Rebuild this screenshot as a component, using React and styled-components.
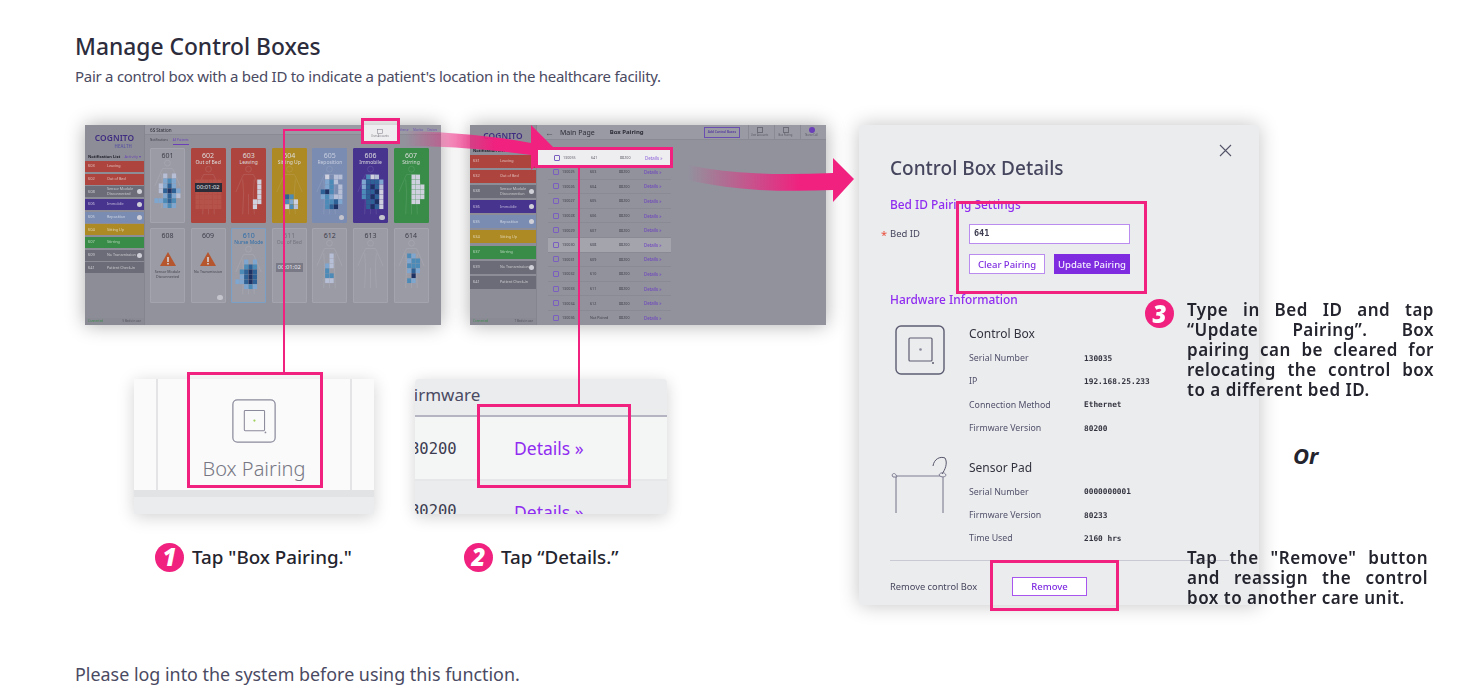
import React from "react";
import styled, { createGlobalStyle } from "styled-components";

const PINK = "#f0217f";
const PURPLE = "#8f2cf0";
const SANS = `"Noto Sans", "Open Sans", sans-serif`;
const MONO = `"DejaVu Sans Mono", "Liberation Mono", monospace`;

const Global = createGlobalStyle`
  html, body { margin: 0; padding: 0; background: #fff; font-family: ${SANS}; }
  * { box-sizing: border-box; }
`;

const Page = styled.div`
  width: 1474px; height: 700px; padding: 32px 0 0 75px; overflow: hidden; color: #46465e;
`;
const Title = styled.h1`
  margin: 0; font-size: 22.8px; line-height: 30px; font-weight: 500; color: #2c2c3c;
`;
const Subtitle = styled.p`
  margin: 3px 0 0; font-size: 15px; line-height: 22px; color: #4a4a62; letter-spacing: -.27px;
`;
const Footer = styled.p`
  margin: 57px 0 0; font-size: 17.9px; line-height: 24px; color: #4a4a62;
`;
const Figure = styled.div`
  position: relative; margin: 38px 0 0 10px; width: 1300px; height: 480px; display: flex;
`;
const LeftCol = styled.div`
  width: 774px; flex: none; display: flex; flex-direction: column;
`;
const ScreenRow = styled.div`display: flex; gap: 29px;`;
const ZoomRow = styled.div`display: flex; gap: 41px; margin: 54px 0 0 49px;`;
const CaptionRow = styled.div`display: flex; margin: 29px 0 0 70px;`;
const Caption = styled.div`
  display: flex; align-items: center; gap: 8px; width: ${p => p.$w}px; height: 28px;
  font-size: 18.8px; font-weight: 500; color: #24242e; white-space: nowrap;
`;
const Badge = styled.span`
  width: 29px; height: 29px; flex: none; border-radius: 50%; background: ${PINK}; color: #fff;
  display: flex; align-items: center; justify-content: center;
  font: italic 900 24px ${SANS}; line-height: 1;
`;

/* ---------- blurred thumbnails ---------- */
const Screen = styled.div`
  position: relative; width: 356px; height: 200px; flex: none; background: #92929d; display: flex;
  box-shadow: 0 0 18px rgba(0,0,0,.32); overflow: hidden; filter: blur(0.7px); color: #3c3c48;
`;
const Side = styled.div`
  width: ${p => p.$w}px; flex: none; background: #8d8d97; display: flex; flex-direction: column;
  border-right: 1px solid #85858f;
`;
const Logo = styled.div`
  margin-top: ${p => p.$top}px; height: ${p => p.$h}px; text-align: center; color: #3f2c80; font-size: 8.4px; line-height: 11px;
  font-weight: 600; letter-spacing: .1px;
  small { display: block; font-size: 4.4px; line-height: 6px; text-align: right; padding-right: 12px; color: #5c58a0; }
`;
const ListHead = styled.div`
  display: flex; justify-content: space-between; padding: 0 3px; font-size: 4px; line-height: 5px;
  margin: 0 0 2px; font-weight: 700; color: #22222c; span { color: #6a4ab0; font-weight: 400; }
`;
const SideRow = styled.div`
  height: ${p => p.$h}px; margin-bottom: ${p => p.$gap}px; background: ${p => p.$c}; color: rgba(255,255,255,.62);
  display: flex; align-items: center; font-size: 3.7px; line-height: 4.4px; padding-left: 3px;
  b { width: ${p => p.$num}px; flex: none; font-weight: 400; font-size: 4px; }
  span { flex: 1; }
  i { width: 5px; height: 5px; margin-right: 2px; border-radius: 50%; background: #d0d0d8; }
`;
const SideFoot = styled.div`
  margin-top: auto; height: 7px; display: flex; justify-content: space-between; padding: 0 3px;
  font-size: 3px; line-height: 7px; color: #3d8a4d; background: #8a8a94; span { color: #55555f; }
`;
const Main = styled.div`flex: 1; display: flex; flex-direction: column; min-width: 0;`;
const Head = styled.div`
  height: ${p => p.$h}px; flex: none; display: flex; align-items: center; padding-left: 5px; background: #9a9aa4;
  font-size: ${p => p.$fs}px; color: #2d2d38; border-bottom: 1px solid #8a8a94; gap: 3px;
  b { font-size: 6px; margin-left: 12px; }
`;
const HeadRight = styled.div`
  margin-left: auto; display: flex; gap: 4px; align-items: center; font-size: 2.7px; color: #6d4fb0; padding-right: 4px;
`;
const Highlight = styled.div`
  position: absolute; left: 277px; top: 0; width: 36px; height: 16px; background: #eeeef0;
  display: flex; flex-direction: column; align-items: center; justify-content: center; font-size: 2.6px; color: #77777f;
  svg { display: block; }
`;
const NurseDot = styled.span`
  width: 6px; height: 6px; border-radius: 50%; background: #6a3fb8; display: block;
`;
const Tabs = styled.div`
  height: 13px; flex: none; display: flex; gap: 5px; padding: 3px 0 0 5px; font-size: 3px; color: #40404c;
  span:last-child { color: #6a3fb8; border-bottom: 1px solid #6a3fb8; height: 7px; }
`;
const CardGrid = styled.div`
  display: grid; grid-template-columns: repeat(7, 35px); grid-auto-rows: 75px; gap: 5px 5.6px; padding-left: 5px;
`;
const Card = styled.div`
  border-radius: 1px; background: ${p => p.$c || "#9b9ba6"};
  border: 1px solid ${p => p.$b || "#a4a4ae"}; text-align: center; color: ${p => p.$t || "#3e3e4a"};
  font-size: 7px; line-height: 7px; padding-top: 3px; position: relative; overflow: hidden;
  small { display: block; font-size: 5px; line-height: 6px; white-space: nowrap; }
  svg { display: block; margin: 0 auto; }
`;
const Timer = styled.span`
  position: absolute; left: 3px; right: 3px; top: 34px; height: 9px; background: ${p => p.$bg || "#2c2c38"};
  color: #e8e8ee; font-size: 5.8px; line-height: 9px; text-align: center;
`;
const Warn = styled.div`
  font-size: 3.6px; line-height: 4.6px; color: #44444e; padding: 0 2px;
  svg { margin: 13px auto 4px; }
`;
const Info = styled.span`
  position: absolute; right: 2px; bottom: 2px; width: 5.5px; height: 5.5px; border-radius: 50%; background: #c4c4cc;
`;
const Back = styled.span`font-size: 9px; color: #55555f; margin: 0 3px 0 3px;`;
const TableHost = styled.div`display: flex; flex-direction: column; padding: 25px 0 0 11px; width: 134px;`;
const TRow = styled.div`
  height: 14.6px; flex: none; display: grid; grid-template-columns: 9px 28px 29px 25px 1fr; align-items: center;
  font-size: 3.7px; color: #3f3f4a; border-bottom: 1px solid #8a8a95; padding-left: 5px;
  background: ${p => (p.$hi ? "#a4a4ad" : "transparent")};
  em { font-style: normal; font-size: 4.4px; color: #6a3fc0; }
`;
const TIcon = styled.span`
  width: 6px; height: 6px; border: 1px solid #7a5fc0; border-radius: 1px; display: block;
`;
const AddBtn = styled.span`
  border: 1px solid #6a4fb0; color: #5a3fa0; font-size: 3.1px; padding: 2px 3px; font-weight: 700; margin-right: 4px; line-height: 5px;
`;
const HeadTool = styled.span`
  width: 22px; height: 14px; display: flex; flex-direction: column; align-items: center; justify-content: center;
  font-size: 2.6px; line-height: 3px; color: #5a5a66; border-left: 1px solid #8a8a94; gap: 1px;
  i { display: block; width: 6px; height: 6px; border: 1px solid #6c6c78; }
`;
const ActiveRow = styled.div`
  position: absolute; left: 452px; top: 24px; width: 133px; height: 17px; background: #eeeef0;
  display: grid; grid-template-columns: 9px 28px 29px 25px 1fr; align-items: center; padding-left: 17px;
  font-size: 3.7px; color: #5c5c68; filter: blur(0.5px);
  em { font-style: normal; font-size: 4.4px; color: #8b5fd8; }
`;

/* ---------- zoom cards ---------- */
const ZoomCard = styled.div`
  position: relative; width: ${p => p.$w}px; height: 135px; flex: none; overflow: hidden; background: #ebecee;
  box-shadow: 0 3px 16px rgba(0,0,0,.18); border-radius: ${p => p.$r || 0}px;
`;
const PairStage = styled.div`
  height: 118px; background: #fafafa; border-bottom: 7px solid #e2e3e5; display: flex; justify-content: center;
`;
const PairCol = styled.div`
  display: flex; flex-direction: column; align-items: center; padding-top: 20px; width: 196px; height: 111px;
  border-left: 2px solid #e4e4e6; border-right: 2px solid #e4e4e6;
`;
const PairLabel = styled.div`
  margin-top: 13px; font-size: 20px; line-height: 26px; font-weight: 300; color: #777784;
`;
const FwHead = styled.div`
  height: 38px; border-bottom: 2px solid #b4b4c2; font-size: 17px; line-height: 32px; color: #4a4a62;
  white-space: nowrap; overflow: hidden; text-indent: -10px;
`;
const FwRow = styled.div`
  height: ${p => p.$h}px; display: flex; background: ${p => p.$bg}; overflow: hidden;
  align-items: ${p => (p.$top ? "flex-start" : "center")}; padding-top: ${p => (p.$top ? 19 : 0)}px;
  border-bottom: ${p => (p.$line ? "2px solid #e6e7e9" : "0")};
`;
const FwNum = styled.span`
  width: 104px; flex: none; font: 500 15.5px ${MONO}; color: #3c3c50; margin: 2px 0 0 -5px; white-space: nowrap;
`;
const FwLink = styled.span`font-size: 17.5px; color: ${PURPLE}; white-space: nowrap;`;

/* ---------- modal ---------- */
const Modal = styled.div`
  position: relative; width: 400px; height: 480px; flex: none; background: #ebecee; padding: 29px 30px 0 31px;
  box-shadow: 0 0 20px rgba(0,0,0,.24); border-radius: 3px;
`;
const Close = styled.div`position: absolute; right: 27px; top: 19px; line-height: 0;`;
const ModalTitle = styled.h2`
  margin: 0; font-size: 19px; line-height: 28px; font-weight: 500; color: #46465e;
`;
const Section = styled.h3`
  margin: ${p => p.$m}px 0 0; font-size: 11.9px; line-height: 18px; font-weight: 500; color: ${PURPLE};
`;
const FormGrid = styled.div`
  margin-top: 11px; display: grid; grid-template-columns: 79px 161px; row-gap: 10px;
`;
const FieldLabel = styled.label`
  position: relative; font-size: 9.5px; line-height: 20px; color: #46465e;
  &::before { content: "*"; position: absolute; left: -9px; top: 1px; color: #e8503c; font-size: 11px; }
`;
const Input = styled.div`
  height: 20px; background: #fff; border: 1.5px solid #bb8cf0; padding-left: 4px;
  font: 700 8.5px/17px ${MONO}; color: #3c3c50;
`;
const Buttons = styled.div`grid-column: 2; display: flex; justify-content: space-between;`;
const Btn = styled.button`
  width: ${p => p.$w}px; height: ${p => p.$h}px; padding: 0; font-family: ${SANS}; font-size: 9.5px; font-weight: 500;
  border: ${p => (p.$solid ? "0" : `1.5px solid ${p.$b || "#bb8cf0"}`)}; border-radius: 0;
  background: ${p => (p.$solid ? "#7f2ce0" : "#fff")}; color: ${p => (p.$solid ? "#f4eefe" : "#7f2ce0")};
`;
const Device = styled.div`
  display: grid; grid-template-columns: 79px 1fr; margin-top: ${p => p.$m}px;
`;
const DeviceIcon = styled.div`padding-left: ${p => p.$left}px; margin-top: ${p => p.$up}px; line-height: 0;`;
const DeviceName = styled.div`font-size: 12px; line-height: 18px; color: #33333f; margin-bottom: 3.5px;`;
const Spec = styled.div`
  height: 23.3px; display: grid; grid-template-columns: 115px 1fr; align-items: center; font-size: 8.8px; color: #50506a;
  b { font: 700 7.8px ${MONO}; color: #33333f; }
`;
const Divider = styled.hr`margin: 10px 0 0; border: 0; border-top: 1px solid #c8c9d2;`;
const RemoveRow = styled.div`
  display: flex; align-items: center; height: 20px; margin-top: 15px; font-size: 9.3px; color: #46465e;
  span { width: 122px; flex: none; }
`;

/* ---------- overlays ---------- */
const Callout = styled.div`
  position: absolute; left: ${p => p.$x}px; top: ${p => p.$y}px; width: ${p => p.$w}px; height: ${p => p.$h}px;
  border: 3px solid ${PINK}; pointer-events: none;
`;
const Leader = styled.div`
  position: absolute; left: ${p => p.$x}px; top: ${p => p.$y}px; width: ${p => p.$w}px; height: ${p => p.$h}px;
  background: ${PINK};
`;
const ArrowLayer = styled.svg`position: absolute; left: 0; top: 0; overflow: visible;`;
const Note = styled.div`
  position: absolute; left: ${p => p.$x}px; top: ${p => p.$y}px; width: ${p => p.$w}px;
  font-size: 17px; line-height: 20px; font-weight: 600; letter-spacing: .5px; color: #24242e; text-align: justify;
`;
const NoteBadge = styled(Badge)`position: absolute; left: 1060px; top: 174px;`;
const Or = styled.div`
  position: absolute; left: 1208px; top: 314px; font: italic 700 22px/32px ${SANS}; color: #24242e;
`;

/* ---------- data ---------- */
const pal = { a: "#b6bfd6", b: "#7fa6cf", c: "#4c8ab8", d: "#2e6296", e: "#1e3263", w: "#cfd2de", g: "#b5524a" };
const Body = ({ c }) => (
  <g fill="none" stroke={c} strokeWidth=".5">
    <circle cx="17" cy="3.5" r="3" />
    <path d="M12 9h10l2 4 6 14M12 9l-2 4-6 14M11 14l1 14-1 22M23 14l-1 14 1 22M17 29v21" />
  </g>
);
const Heat = ({ map, line = "rgba(235,235,245,.22)" }) => (
  <svg width="33" height="52" viewBox="0 0 34 52">
    <Body c={line} />
    {map.map((row, y) =>
      [...row].map((ch, x) =>
        pal[ch] ? <rect key={`${x}-${y}`} x={3.5 + x * 4.5} y={4 + y * 5.1} width="4.3" height="4.9" fill={pal[ch]} /> : null
      )
    )}
  </svg>
);
const m601 = ["", "", "..a.a.", "..bcb.", ".abdb.", ".adedb", "..bdba", "bbcdc.", "..bcb."];
const m603 = ["", "", ".....w", ".....w", ".....w", ".....w", "....ww", "....w."];
const m604 = ["", "", "", "", "", "..dc..", "..cbw.", "..wca."];
const m605 = ["", "..w.aa", "..bca.", "..bc.a", ".dec.a", ".bcbaa", "..ccdb", "..cde."];
const m606 = ["", "..cwa.", ".bdddb", ".bdeda", ".cddew", ".cdedw", "..ddew", "..dedw"];
const m607 = ["", "...ww.", "...ww.", "...www", "...www", "...www", "...ww."];
const m610 = ["", "", "..b.b.", "..cdc.", ".cded.", ".bded.", "bbded.", "..bcb."];
const m612 = ["", "", "...a..", "...a..", "..ba..", "..c...", "..cc..", "..aa.."];
const m614 = ["", "", "..cb..", "..bcc.", "..ccc.", "..bdb.", "...e..", "..cb.."];
const gridRed = ["", "", "gggggg", "gggggg", "gggggg", "gggggg", "gggggg", "gggggg"];

const RED = "#ad453e", YEL = "#ad8a24", BLU = "#7a8cb2", PUR = "#47348f", GRN = "#388c47", GRY = "#6c6c78";
const listA = [
  ["603", "Leaving", RED], ["602", "Out of Bed", RED], ["608", "Sensor Module Disconnected", GRY, 1],
  ["606", "Immobile", PUR, 1], ["605", "Reposition", BLU, 1], ["604", "Sitting Up", YEL], ["607", "Stirring", GRN],
  ["609", "No Transmission", GRY, 1], ["641", "Patient Check-in", GRY],
];
const listB = [
  ["631", "Leaving", RED], ["632", "Out of Bed", RED], ["638", "Sensor Module Disconnection", GRY, 1],
  ["636", "Immobile", PUR, 1], ["635", "Reposition", BLU, 1], ["634", "Sitting Up", YEL], ["637", "Stirring", GRN],
  ["639", "No Transmission", GRY, 1], ["641", "Patient Check-in", GRY],
];
const table = [
  ["130025", "603"], ["130026", "604"], ["130027", "605"], ["130028", "606"], ["130029", "607"], ["130030", "608"],
  ["130031", "609"], ["130032", "610"], ["130033", "611"], ["130034", "612"], ["130036", "Not Paired"],
];

const SideList = ({ items, h, gap, num }) => (
  <>
    {items.map(([n, t, c, info]) => (
      <SideRow key={n} $c={c} $h={h} $gap={gap} $num={num}>
        <b>{n}</b><span>{t}</span>{info ? <i /> : null}
      </SideRow>
    ))}
  </>
);

const WarnIcon = () => (
  <svg width="16" height="14" viewBox="0 0 16 14">
    <path d="M8 0 16 14H0Z" fill="#b5562e" />
    <path d="M7.2 5h1.6v5H7.2zM7.2 11h1.6v1.5H7.2z" fill="#d8d8de" />
  </svg>
);

const BoxIcon = ({ size, stroke, dot, sw = 1 }) => (
  <svg width={size} height={size} viewBox="0 0 50 50">
    <rect x="1" y="1" width="48" height="48" rx="5" fill="none" stroke={stroke} strokeWidth={sw * 1.4} />
    <rect x="14" y="13" width="23" height="23" rx="1" fill="none" stroke={stroke} strokeWidth={sw * 1.2} />
    <circle cx="25.5" cy="24.5" r="1.3" fill={dot} />
    <circle cx="38" cy="38" r="1" fill={stroke} />
  </svg>
);

const BedIcon = () => (
  <svg width="58" height="62" viewBox="0 0 58 62" fill="none" stroke="#7d7d92" strokeWidth="1">
    <path d="M3 21H53M5 22V58M52 22V58" strokeWidth="1.1" />
    <path d="M1 20c1-2 3-2 4 0l1 2-4 0zM48 20c1-3 6-3 7 0 0 2-5 3-7 0z" fill="#ebecee" />
    <path d="M42 11C43 4 49 1 54 3 57 8 54 15 51 19" stroke="#55556a" />
  </svg>
);

export default function App() {
  return (
    <>
      <Global />
      <Page>
        <Title>Manage Control Boxes</Title>
        <Subtitle>Pair a control box with a bed ID to indicate a patient's location in the healthcare facility.</Subtitle>
        <Figure>
          <LeftCol>
            <ScreenRow>
              <Screen>
                <Side $w={60}>
                  <Logo $top={7} $h={22}>COGNITO<small>HEALTH</small></Logo>
                  <ListHead>Notification List<span>Activity ▾</span></ListHead>
                  <SideList items={listA} h={11} gap={1.67} num={19} />
                  <SideFoot>Connected<span>5 Beds in use</span></SideFoot>
                </Side>
                <Main>
                  <Head $h={10} $fs={4.6}>
                    6S Station
                    <HeadRight>Reset Others ▾<span>Monitor</span><span>Devices</span></HeadRight>
                  </Head>
                  <Tabs><span>Notifications</span><span>All Patients</span></Tabs>
                  <CardGrid>
                    <Card>601<Heat map={m601} /></Card>
                    <Card $c={RED} $b={RED} $t="#ddd">602<small>Out of Bed</small><Heat map={gridRed} /><Timer>00:01:02</Timer></Card>
                    <Card $c={RED} $b={RED} $t="#ddd">603<small>Leaving</small><Heat map={m603} /></Card>
                    <Card $c={YEL} $b={YEL} $t="#ddd">604<small>Sitting Up</small><Heat map={m604} /></Card>
                    <Card $c={BLU} $b={BLU} $t="#c8cede">605<small>Reposition</small><Heat map={m605} /><Info /></Card>
                    <Card $c={PUR} $b={PUR} $t="#ddd">606<small>Immobile</small><Heat map={m606} /><Info /></Card>
                    <Card $c={GRN} $b={GRN} $t="#ddd">607<small>Stirring</small><Heat map={m607} /></Card>
                    <Card>608<Warn><WarnIcon />Sensor Module Disconnected</Warn></Card>
                    <Card>609<Warn><WarnIcon />No Transmission</Warn><Info /></Card>
                    <Card $b="#7aa0c8" $t="#2f6ea8">610<small>Nurse Mode</small><Heat map={m610} /></Card>
                    <Card $t="#74747f">611<small>Out of Bed</small><Timer $bg="#7a7a86">00:01:02</Timer></Card>
                    <Card>612<Heat map={m612} /></Card>
                    <Card>613<Heat map={[]} /></Card>
                    <Card>614<Heat map={m614} /></Card>
                  </CardGrid>
                </Main>
                <Highlight>
                  <svg width="6" height="5" viewBox="0 0 6 5"><rect x=".5" y=".5" width="5" height="4" fill="none" stroke="#8a8a94" strokeWidth=".6" /></svg>
                  User Accounts
                </Highlight>
              </Screen>
              <Screen>
                <Side $w={67}>
                  <Logo $top={5} $h={18}>COGNITO</Logo>
                  <ListHead>Notification List</ListHead>
                  <SideList items={listB} h={13} gap={2.1} num={27} />
                  <SideFoot>Connected<span>7 Beds in use</span></SideFoot>
                </Side>
                <Main>
                  <Head $h={15} $fs={7}>
                    <Back>←</Back>Main Page
                    <b>Box Pairing</b>
                    <HeadRight>
                      <AddBtn>Add Control Boxes</AddBtn>
                      <HeadTool><i />User Accounts</HeadTool>
                      <HeadTool><i />Box Pairing</HeadTool>
                      <HeadTool><NurseDot />Nurse Call</HeadTool>
                    </HeadRight>
                  </Head>
                  <TableHost>
                    {table.map(([id, bed], i) => (
                      <TRow key={id} $hi={i === 5}>
                        <TIcon /><span>{id}</span><span>{bed}</span><span>88200</span><em>Details »</em>
                      </TRow>
                    ))}
                  </TableHost>
                </Main>
              </Screen>
            </ScreenRow>
            <ZoomRow>
              <ZoomCard $w={240}>
                <PairStage>
                  <PairCol>
                    <BoxIcon size={44} stroke="#8a8a9c" dot="#9fd05a" />
                    <PairLabel>Box Pairing</PairLabel>
                  </PairCol>
                </PairStage>
              </ZoomCard>
              <ZoomCard $w={252} $r={4}>
                <FwHead>Firmware</FwHead>
                <FwRow $h={64} $bg="#f4f5f5" $line><FwNum>80200</FwNum><FwLink>Details »</FwLink></FwRow>
                <FwRow $h={33} $bg="#ebecee" $top><FwNum>80200</FwNum><FwLink>Details »</FwLink></FwRow>
              </ZoomCard>
            </ZoomRow>
            <CaptionRow>
              <Caption $w={309}><Badge>1</Badge>Tap "Box Pairing."</Caption>
              <Caption $w={200}><Badge>2</Badge>Tap “Details.”</Caption>
            </CaptionRow>
          </LeftCol>
          <Modal>
            <Close>
              <svg width="13" height="13" viewBox="0 0 13 13" stroke="#55556a" strokeWidth="1.1"><path d="M1 1 12 12M12 1 1 12" /></svg>
            </Close>
            <ModalTitle>Control Box Details</ModalTitle>
            <Section $m={13}>Bed ID Pairing Settings</Section>
            <FormGrid>
              <FieldLabel>Bed ID</FieldLabel>
              <Input>641</Input>
              <Buttons>
                <Btn $w={76} $h={20}>Clear Pairing</Btn>
                <Btn $w={76} $h={20} $solid>Update Pairing</Btn>
              </Buttons>
            </FormGrid>
            <Section $m={16}>Hardware Information</Section>
            <Device $m={17}>
              <DeviceIcon $left={5} $up={0}><BoxIcon size={50} stroke="#5c5c72" dot="#8a8a9c" /></DeviceIcon>
              <div>
                <DeviceName>Control Box</DeviceName>
                <Spec>Serial Number<b>130035</b></Spec>
                <Spec>IP<b>192.168.25.233</b></Spec>
                <Spec>Connection Method<b>Ethernet</b></Spec>
                <Spec>Firmware Version<b>80200</b></Spec>
              </div>
            </Device>
            <Device $m={19}>
              <DeviceIcon $left={1} $up={-4}><BedIcon /></DeviceIcon>
              <div>
                <DeviceName>Sensor Pad</DeviceName>
                <Spec>Serial Number<b>0000000001</b></Spec>
                <Spec>Firmware Version<b>80233</b></Spec>
                <Spec>Time Used<b>2160 hrs</b></Spec>
              </div>
            </Device>
            <Divider />
            <RemoveRow>
              <span>Remove control Box</span>
              <Btn $w={75} $h={19} $b="#a855f0">Remove</Btn>
            </RemoveRow>
          </Modal>

          <ArrowLayer width="800" height="100">
            <defs>
              <linearGradient id="arrowA" x1="320" x2="410" y1="0" y2="0" gradientUnits="userSpaceOnUse">
                <stop offset="0" stopColor={PINK} stopOpacity="0" />
                <stop offset="1" stopColor={PINK} />
              </linearGradient>
              <linearGradient id="arrowB" x1="603" x2="715" y1="0" y2="0" gradientUnits="userSpaceOnUse">
                <stop offset="0" stopColor={PINK} stopOpacity="0" />
                <stop offset="1" stopColor={PINK} />
              </linearGradient>
            </defs>
            <path d="M320 6C365 7 410 11 446 18V0L469 23 446 45V30C410 25 365 21 320 21Z" fill="url(#arrowA)" />
            <path d="M603 40C650 50 700 50 748 48V33L769 54 748 77V65C700 67 650 66 603 55Z" fill="url(#arrowB)" />
          </ArrowLayer>
          <ActiveRow>
            <TIcon /><span>130055</span><span>641</span><span>88200</span><em>Details »</em>
          </ActiveRow>

          <Leader $x={198} $y={4} $w={78} $h={2} />
          <Leader $x={198} $y={4} $w={2} $h={243} />
          <Leader $x={493} $y={42} $w={2} $h={238} />
          <Callout $x={276} $y={-7} $w={39} $h={26} />
          <Callout $x={450} $y={22} $w={138} $h={21} />
          <Callout $x={102} $y={247} $w={136} $h={116} />
          <Callout $x={392} $y={279} $w={154} $h={84} />
          <Callout $x={871} $y={76} $w={191} $h={93} />
          <Callout $x={905} $y={435} $w={129} $h={51} />

          <NoteBadge>3</NoteBadge>
          <Note $x={1102} $y={175} $w={247}>
            Type in Bed ID and tap “Update Pairing”. Box pairing can be cleared for relocating the control box to a different bed ID.
          </Note>
          <Or>Or</Or>
          <Note $x={1102} $y={423} $w={241}>
            Tap the "Remove" button and reassign the control box to another care unit.
          </Note>
        </Figure>
        <Footer>Please log into the system before using this function.</Footer>
      </Page>
    </>
  );
}
